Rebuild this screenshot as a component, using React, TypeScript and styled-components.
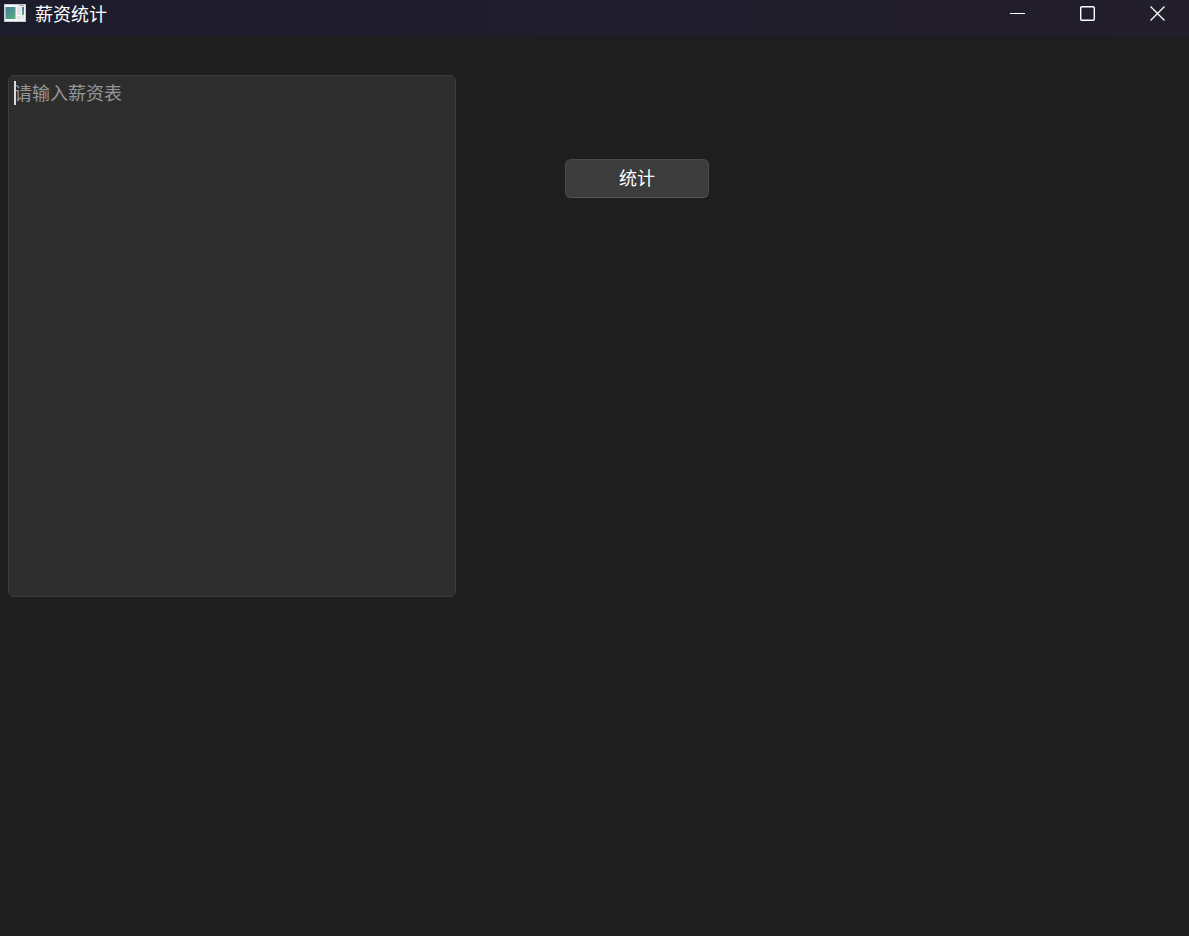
import React, { useState } from "react";
import styled, { createGlobalStyle } from "styled-components";

const GlobalStyle = createGlobalStyle`
  *, *::before, *::after { box-sizing: border-box; }
  body {
    margin: 0;
    background: #1e1e1e;
    font-family: "Noto Sans CJK SC", sans-serif;
    font-size: 18px;
    line-height: 24px;
  }
`;

const Window = styled.div`
  display: flex;
  flex-direction: column;
  min-height: 100vh;
  background: #1e1e1e;
  color: #ffffff;
`;

const TitleBar = styled.header`
  display: flex;
  justify-content: space-between;
  height: 36px;
  padding: 0 0 8px 4px;
  background: linear-gradient(90deg, #1d1c2c, #231e2c);
`;

const TitleGroup = styled.div`
  display: flex;
  align-items: center;
  gap: 9px;
  padding-bottom: 3px;
`;

const Title = styled.h1`
  margin: 0;
  font-size: 18px;
  font-weight: 400;
  line-height: 24px;
`;

const WindowControls = styled.div`
  display: flex;
`;

const ControlButton = styled.button`
  display: flex;
  align-items: center;
  justify-content: center;
  width: 70px;
  height: 28px;
  padding: 0 0 0 7px;
  border: 0;
  background: transparent;
  color: #ffffff;
`;

const Content = styled.main`
  display: flex;
  align-items: flex-start;
  flex-wrap: wrap;
  gap: 109px;
  padding: 39px 8px;
`;

const Field = styled.div`
  position: relative;
  display: flex;
  flex: 0 1 448px;
`;

const SheetInput = styled.textarea`
  width: 100%;
  height: 522px;
  padding: 4px 5px;
  border: 1px solid #3c3c3c;
  border-radius: 6px;
  outline: 0;
  resize: none;
  background: #2d2d2d;
  color: #ffffff;
  caret-color: transparent;
  font: inherit;

  &::placeholder {
    color: #969696;
    opacity: 1;
  }
`;

const Caret = styled.span`
  position: absolute;
  top: 6px;
  left: 6px;
  width: 2px;
  height: 24px;
  background: #dcdcdc;
`;

const CountButton = styled.button`
  width: 144px;
  height: 39px;
  margin-top: 84px;
  padding: 0 0 3px;
  border: 1px solid #4a4a4a;
  border-bottom-color: #575757;
  border-radius: 6px;
  background: #3c3c3c;
  color: #ffffff;
  font: inherit;
`;

function AppIcon() {
  return (
    <svg width="22" height="18" viewBox="0 0 22 18" aria-hidden="true">
      <defs>
        <linearGradient id="pane" x1="0" y1="0" x2="1" y2="1">
          <stop offset="0" stopColor="#4477a0" />
          <stop offset="1" stopColor="#58b47c" />
        </linearGradient>
        <linearGradient id="strip" x1="0" y1="0" x2="0" y2="1">
          <stop offset="0" stopColor="#3f6fa0" />
          <stop offset="1" stopColor="#62b78a" />
        </linearGradient>
      </defs>
      <rect width="22" height="18" fill="#c4cbd0" />
      <rect x="1" y="1" width="20" height="16" fill="#f5f6f7" />
      <rect x="15" y="1" width="5" height="1" fill="#8fa3b1" />
      <rect x="1.5" y="3" width="10" height="12" fill="url(#pane)" />
      <rect x="13" y="3" width="4" height="8" fill="#e2e4e6" />
      <rect x="13" y="12" width="4" height="3" fill="#e2e4e6" />
      <rect x="18" y="3" width="2" height="8" fill="url(#strip)" />
      <rect x="18" y="11" width="2" height="4" fill="#e2e4e6" />
    </svg>
  );
}

function MinimizeIcon() {
  return (
    <svg width="16" height="16" viewBox="0 0 16 16" aria-hidden="true">
      <rect y="7" width="15" height="1" fill="currentColor" />
    </svg>
  );
}

function MaximizeIcon() {
  return (
    <svg width="16" height="16" viewBox="0 0 16 16" aria-hidden="true">
      <rect x="0.7" y="0.7" width="13.6" height="13.6" rx="1.2" fill="none" stroke="currentColor" strokeWidth="1.4" />
    </svg>
  );
}

function CloseIcon() {
  return (
    <svg width="16" height="16" viewBox="0 0 16 16" aria-hidden="true">
      <path d="M0.5 0.5 14.5 14.5M14.5 0.5 0.5 14.5" stroke="currentColor" strokeWidth="1.3" />
    </svg>
  );
}

export default function App() {
  const [sheet, setSheet] = useState("");

  return (
    <Window>
      <GlobalStyle />
      <TitleBar>
        <TitleGroup>
          <AppIcon />
          <Title>薪资统计</Title>
        </TitleGroup>
        <WindowControls>
          <ControlButton type="button" aria-label="最小化">
            <MinimizeIcon />
          </ControlButton>
          <ControlButton type="button" aria-label="最大化">
            <MaximizeIcon />
          </ControlButton>
          <ControlButton type="button" aria-label="关闭">
            <CloseIcon />
          </ControlButton>
        </WindowControls>
      </TitleBar>
      <Content>
        <Field>
          <SheetInput
            aria-label="薪资表"
            placeholder="请输入薪资表"
            value={sheet}
            onChange={(event: React.ChangeEvent<HTMLTextAreaElement>) => setSheet(event.target.value)}
          />
          {sheet === "" && <Caret />}
        </Field>
        <CountButton type="button">统计</CountButton>
      </Content>
    </Window>
  );
}
